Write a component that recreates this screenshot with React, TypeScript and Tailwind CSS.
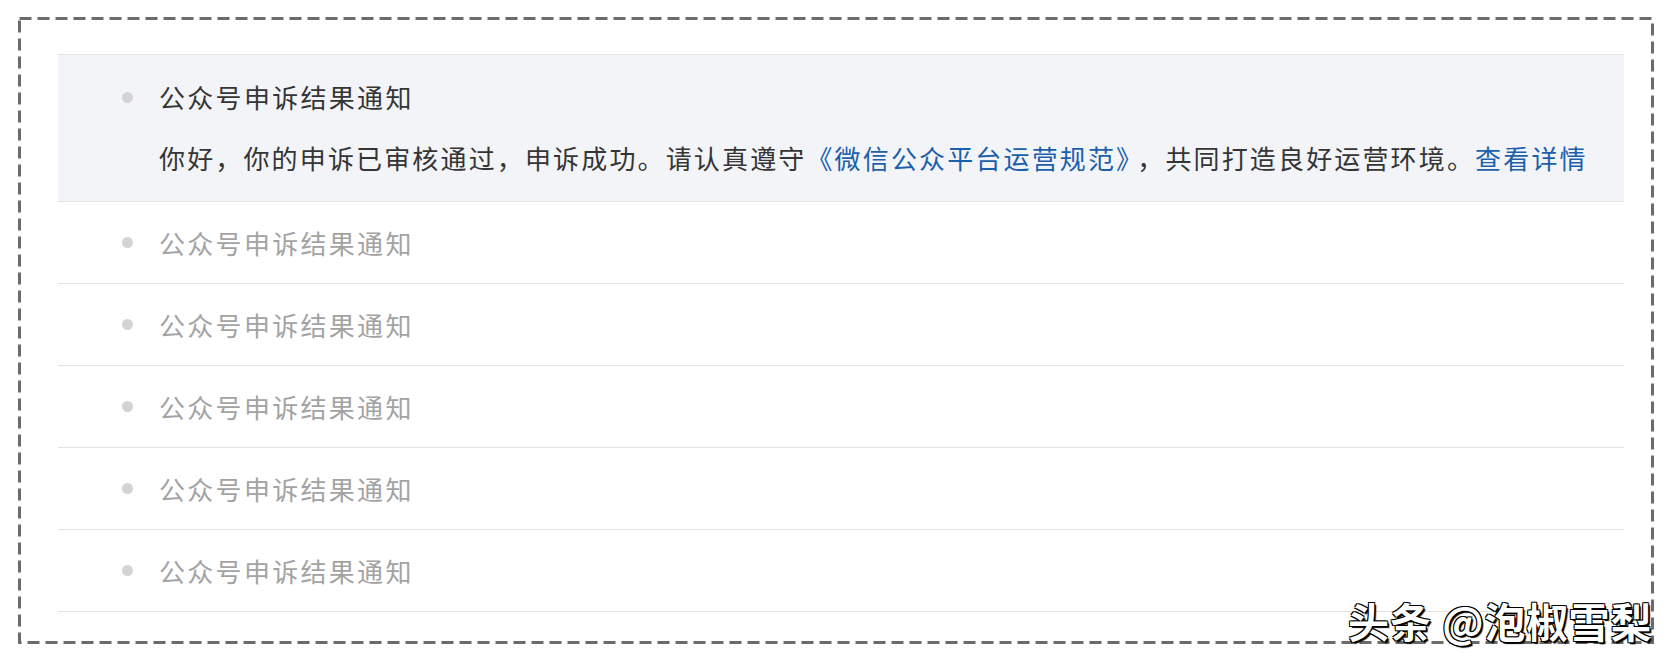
import React from "react";

const cjk = "font-['Microsoft_YaHei','Noto_Sans_CJK_SC',sans-serif]";

function Row({ active }: { active?: boolean }) {
    return (
        <li
            className={
                "flex border-b border-[#e3e3e3] pl-[64px] " +
                (active ? "items-start bg-[#f3f4f7] h-[147px] pt-[24px]" : "items-center h-[82px]")
            }
        >
            <span
                className={
                    "w-[11px] h-[11px] rounded-full bg-[#d3d3d3] shrink-0 " +
                    (active ? "mt-[13px]" : "")
                }
            />
            <div className="ml-[26px]">
                <div
                    className={
                        "text-[26px] leading-[36px] tracking-[2.3px] " +
                        (active ? "text-[#353535]" : "text-[#a3a3a3]")
                    }
                >
                    公众号申诉结果通知
                </div>
                {active && (
                    <div className="mt-[25px] text-[26px] leading-[36px] tracking-[2.15px] text-[#353535] whitespace-nowrap">
                        你好，你的申诉已审核通过，申诉成功。请认真遵守
                        <span className="text-[#1b60ac]">《微信公众平台运营规范》</span>
                        <span className="pl-[6px]">，</span>共同打造良好运营环境。
                        <span className="text-[#1b60ac]">查看详情</span>
                    </div>
                )}
            </div>
        </li>
    );
}

export default function App() {
    return (
        <div className={"w-[1674px] h-[664px] bg-white pt-[17px] pl-[18px] relative " + cjk}>
            <div className="relative w-[1636px] h-[627px] pt-[37px] pl-[40px] pr-[30px]">
                {/* dashed frame */}
                <svg className="absolute inset-0 pointer-events-none" width="1636" height="627">
                    <rect
                        x="1.5"
                        y="1.5"
                        width="1633"
                        height="624"
                        fill="none"
                        stroke="#6b6b6b"
                        strokeWidth="3"
                        strokeDasharray="12 6"
                    />
                </svg>
                <ul className="border-t border-[#e3e3e3]">
                    <Row active />
                    <Row />
                    <Row />
                    <Row />
                    <Row />
                    <Row />
                </ul>
            </div>
            <div className="absolute left-[1348px] top-[596px] text-[41px] leading-[48px] font-semibold tracking-[1px] text-white whitespace-nowrap [text-shadow:1px_1px_0_#000,-1px_-1px_0_#000,1px_-1px_0_#000,-1px_1px_0_#000,2px_2px_1px_#000]">
                头条 @泡椒雪梨
            </div>
        </div>
    );
}
